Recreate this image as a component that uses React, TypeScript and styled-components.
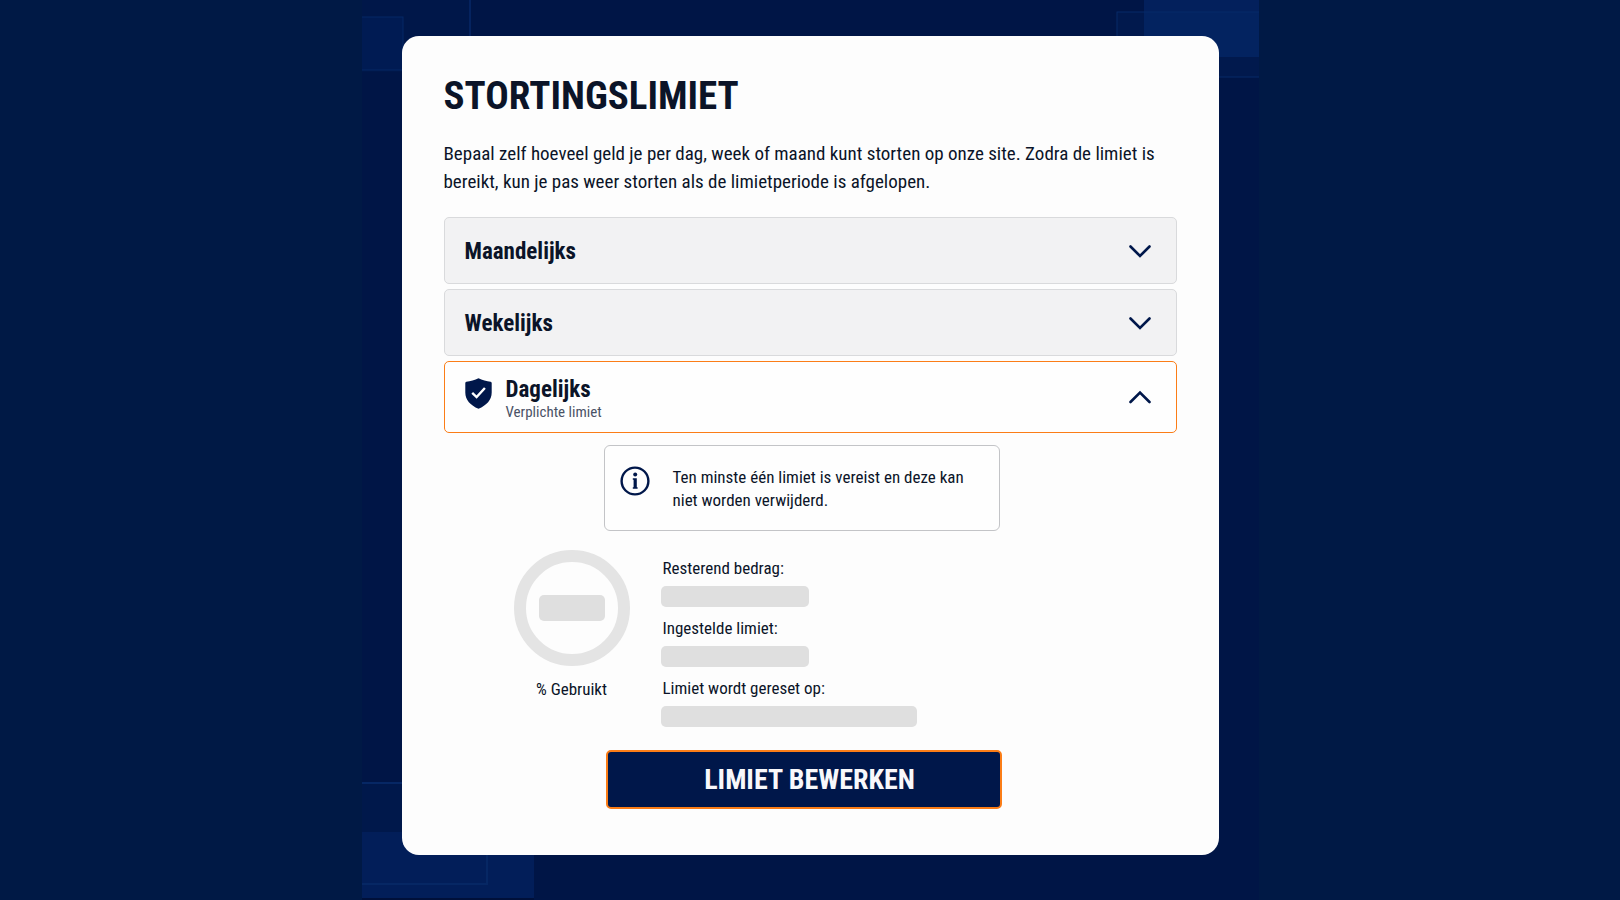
import React, { useState } from 'react';
import styled, { createGlobalStyle } from 'styled-components';

const color = {
  page: '#001945',
  stage: '#001546',
  navy: '#00174a',
  ink: '#0b1428',
  muted: '#4a5266',
  orange: '#fb7d17',
  ring: '#e4e4e4',
  skeleton: '#dfdfdf',
};

const GlobalStyle = createGlobalStyle`
  *, *::before, *::after { box-sizing: border-box; }
  body {
    margin: 0;
    background: ${color.page};
    color: ${color.ink};
    font-family: 'Roboto Condensed', Roboto, 'Liberation Sans', sans-serif;
  }
  h1, h2, p, dl, dd { margin: 0; }
  button { font: inherit; color: inherit; cursor: pointer; }
`;

const Page = styled.div`
  display: flex;
  justify-content: center;
  min-height: 100vh;
`;

const Stage = styled.div`
  position: relative;
  width: 100%;
  max-width: 897px;
  padding: 36px 40px 42px;
  background: ${color.stage};
  overflow: hidden;
`;

const Corner = styled.svg<{ $v: 'top' | 'bottom'; $h: 'left' | 'right' }>`
  position: absolute;
  ${p => p.$v}: 0;
  ${p => p.$h}: 0;
`;

const Card = styled.main`
  position: relative;
  padding: 36px 42px 46px;
  border-radius: 17px;
  background: #fdfdfd;
`;

const Title = styled.h1`
  font-size: 39px;
  line-height: 48px;
  font-weight: 700;
`;

const Intro = styled.p`
  margin: 20px 0 21px;
  font-size: 19px;
  line-height: 28px;
`;

const Accordion = styled.div`
  display: flex;
  flex-direction: column;
  gap: 5px;
`;

const ItemButton = styled.button<{ $open: boolean; $tall: boolean }>`
  display: flex;
  align-items: center;
  width: 100%;
  min-height: ${p => (p.$tall ? 72 : 67)}px;
  padding: 0 25px 0 20px;
  border: 1px solid ${p => (p.$open ? color.orange : '#d9dadc')};
  border-radius: 5px;
  background: ${p => (p.$open ? '#fefefe' : '#f2f2f3')};
  text-align: left;
`;

const ItemLead = styled.span<{ $tall: boolean }>`
  display: flex;
  flex: 1;
  gap: 14px;
  padding-top: ${p => (p.$tall ? 6 : 2)}px;
`;

const ItemText = styled.span`
  display: flex;
  flex-direction: column;
`;

const ItemTitle = styled.span`
  font-size: 23px;
  line-height: 24px;
  font-weight: 700;
`;

const ItemNote = styled.span`
  font-size: 15px;
  line-height: 20px;
  font-weight: 400;
  color: ${color.muted};
`;

const Panel = styled.section`
  padding-top: 7px;
`;

const InfoBox = styled.div`
  display: flex;
  gap: 23px;
  width: 396px;
  max-width: 100%;
  min-height: 86px;
  margin-left: 160px;
  padding: 20px 15px 18px;
  border: 1px solid #c3c4c7;
  border-radius: 6px;
  font-size: 17px;
  line-height: 23px;
  background: #fefefe;

  svg { flex: none; }
`;

const Details = styled.div`
  display: flex;
  gap: 31px;
  margin: 19px 0 23px 70px;
`;

const Usage = styled.div`
  display: flex;
  flex-direction: column;
  align-items: center;
  gap: 11px;
  font-size: 17px;
  line-height: 24px;
`;

const Ring = styled.div`
  display: flex;
  align-items: center;
  justify-content: center;
  width: 116px;
  height: 116px;
  border: 12px solid ${color.ring};
  border-radius: 50%;
`;

const Skeleton = styled.div<{ $w: number; $h: number }>`
  width: ${p => p.$w}px;
  height: ${p => p.$h}px;
  border-radius: 5px;
  background: ${color.skeleton};
`;

const Facts = styled.dl`
  display: flex;
  flex-direction: column;
  gap: 9px;
  padding-top: 6px;
`;

const Fact = styled.div`
  display: flex;
  flex-direction: column;
  gap: 6px;
`;

const FactLabel = styled.dt`
  padding-left: 2px;
  font-size: 17px;
  line-height: 24px;
`;

const EditButton = styled.button`
  display: block;
  width: 396px;
  max-width: 100%;
  height: 59px;
  margin-left: 162px;
  padding: 0 0 0 12px;
  border: 2px solid ${color.orange};
  border-radius: 5px;
  background: ${color.navy};
  && {
    color: #f8f8fb;
    font-size: 28px;
    font-weight: 700;
  }
`;

const Backdrop = () => (
  <>
    <Corner $v="top" $h="left" width="110" height="72" aria-hidden="true">
      <rect x="0" y="0" width="108" height="72" fill="#001749" />
      <rect x="-2" y="17" width="43" height="53" fill="#001b53" stroke="#052866" />
      <path d="M108 0V72" stroke="#05235f" strokeWidth="2" />
    </Corner>
    <Corner $v="top" $h="right" width="143" height="79" aria-hidden="true">
      <rect x="28" y="0" width="115" height="57" fill="#03205c" />
      <rect x="1" y="12" width="150" height="65" fill="#0a3a80" fillOpacity="0.12" stroke="#072a68" />
    </Corner>
    <Corner $v="bottom" $h="left" width="172" height="119" aria-hidden="true">
      <rect x="0" y="2" width="125" height="100" fill="#00184b" />
      <rect x="0" y="51" width="172" height="66" fill="#021e59" />
      <rect x="-2" y="2" width="127" height="101" fill="none" stroke="#062764" strokeWidth="2" />
      <rect x="0" y="117" width="172" height="2" fill="#00103a" />
    </Corner>
  </>
);

const Chevron = ({ up }: { up: boolean }) => (
  <svg width="22" height="14" viewBox="0 0 22 14" fill="none" aria-hidden="true">
    <path
      d={up ? 'M1.5 12 11 2.5 20.5 12' : 'M1.5 2.5 11 12 20.5 2.5'}
      stroke={color.navy}
      strokeWidth="2.6"
      strokeLinecap="round"
    />
  </svg>
);

const Shield = () => (
  <svg width="27" height="31" viewBox="0 0 27 31" aria-hidden="true">
    <path
      d="M13.5 0.3C10 2.2 5.2 3.2 1.4 3.7Q0.3 3.9 0.3 5V14.5C0.3 22 5.4 27.4 13.5 30.8C21.6 27.4 26.7 22 26.7 14.5V5Q26.7 3.9 25.6 3.7C21.8 3.2 17 2.2 13.5 0.3Z"
      fill={color.navy}
    />
    <path d="M7.2 14.8 11.6 19 19.9 10" fill="none" stroke="#fff" strokeWidth="2.4" />
  </svg>
);

const Info = () => (
  <svg width="30" height="30" viewBox="0 0 30 30" aria-hidden="true">
    <circle cx="15" cy="15" r="13.4" fill="none" stroke={color.navy} strokeWidth="2.4" />
    <circle cx="15.2" cy="8.6" r="2" fill={color.navy} />
    <path d="M12.8 12.2H16.8V21.2H17.6V22.8H12.8V21.2H13.6V13.8H12.8Z" fill={color.navy} />
  </svg>
);

const facts = [
  { label: 'Resterend bedrag:', width: 148 },
  { label: 'Ingestelde limiet:', width: 148 },
  { label: 'Limiet wordt gereset op:', width: 256 },
];

const LimitPanel = ({ id }: { id: string }) => (
  <Panel id={id}>
    <InfoBox role="note">
      <Info />
      <p>Ten minste één limiet is vereist en deze kan niet worden verwijderd.</p>
    </InfoBox>
    <Details>
      <Usage>
        <Ring>
          <Skeleton $w={66} $h={26} />
        </Ring>
        <span>% Gebruikt</span>
      </Usage>
      <Facts>
        {facts.map(f => (
          <Fact key={f.label}>
            <FactLabel>{f.label}</FactLabel>
            <dd>
              <Skeleton $w={f.width} $h={21} />
            </dd>
          </Fact>
        ))}
      </Facts>
    </Details>
    <EditButton type="button">LIMIET BEWERKEN</EditButton>
  </Panel>
);

const periods: { id: string; title: string; note?: string }[] = [
  { id: 'maand', title: 'Maandelijks' },
  { id: 'week', title: 'Wekelijks' },
  { id: 'dag', title: 'Dagelijks', note: 'Verplichte limiet' },
];

export default function App() {
  const [openId, setOpenId] = useState<string | null>('dag');

  return (
    <Page>
      <GlobalStyle />
      <Stage>
        <Backdrop />
        <Card>
          <Title>STORTINGSLIMIET</Title>
          <Intro>
            Bepaal zelf hoeveel geld je per dag, week of maand kunt storten op onze site. Zodra de
            limiet is bereikt, kun je pas weer storten als de limietperiode is afgelopen.
          </Intro>
          <Accordion>
            {periods.map(({ id, title, note }) => {
              const open = openId === id;
              const tall = Boolean(note);
              return (
                <React.Fragment key={id}>
                  <h2>
                    <ItemButton
                      type="button"
                      $open={open}
                      $tall={tall}
                      aria-expanded={open}
                      aria-controls={`${id}-panel`}
                      onClick={() => setOpenId(open ? null : id)}
                    >
                      <ItemLead $tall={tall}>
                        {note && <Shield />}
                        <ItemText>
                          <ItemTitle>{title}</ItemTitle>
                          {note && <ItemNote>{note}</ItemNote>}
                        </ItemText>
                      </ItemLead>
                      <Chevron up={open} />
                    </ItemButton>
                  </h2>
                  {open && <LimitPanel id={`${id}-panel`} />}
                </React.Fragment>
              );
            })}
          </Accordion>
        </Card>
      </Stage>
    </Page>
  );
}
